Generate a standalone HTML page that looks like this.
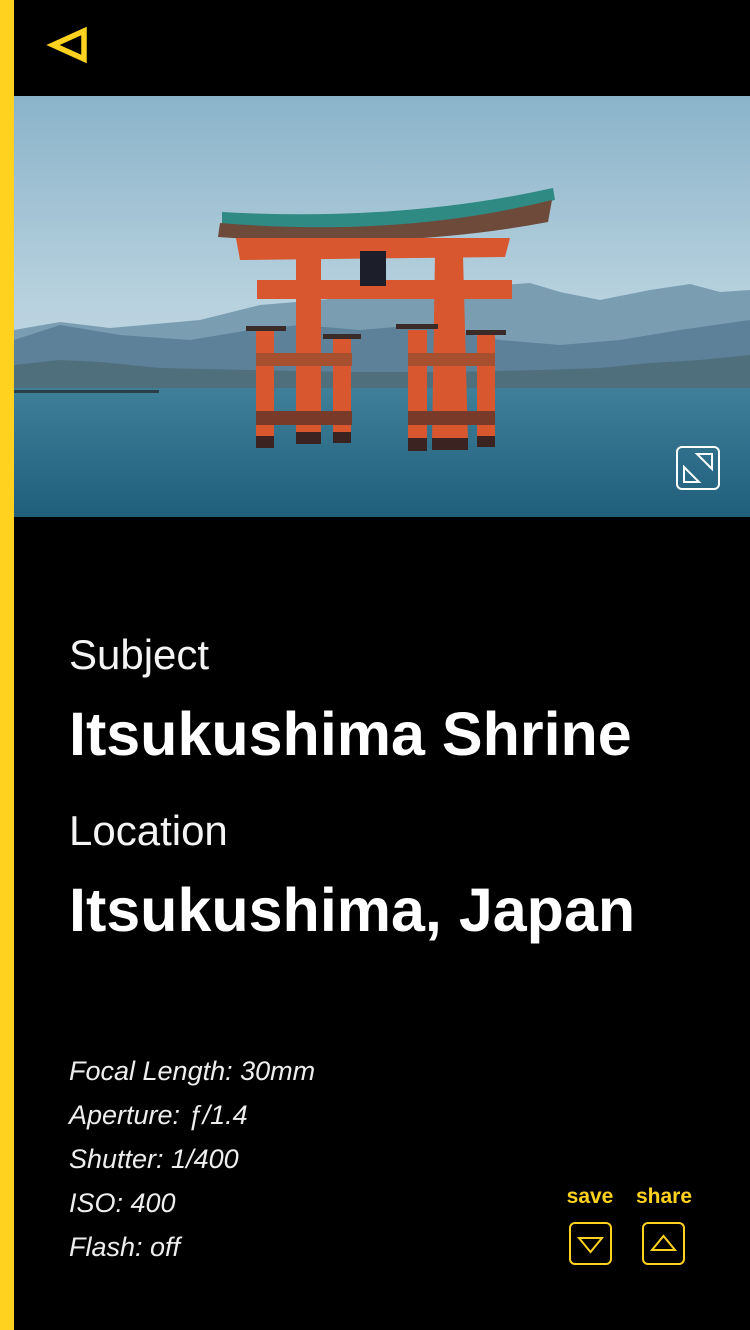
<!DOCTYPE html>
<html><head><meta charset="utf-8"><style>
html,body{margin:0;padding:0;background:#000;}
body{width:750px;height:1330px;position:relative;overflow:hidden;font-family:"Liberation Sans",sans-serif;color:#fff;}
.bar{position:absolute;left:0;top:0;width:14px;height:1330px;background:#ffd21f;}
.t{position:absolute;left:69px;white-space:nowrap;}
.lab{font-size:42px;font-weight:normal;color:#f4f4f4;}
.big{font-size:61px;font-weight:bold;letter-spacing:0;}
.det{font-size:27px;font-style:italic;color:#eee;line-height:44px;}
.y{position:absolute;color:#ffd21f;font-weight:bold;font-size:21px;text-align:center;}
</style></head><body>
<div class="bar"></div>
<svg style="position:absolute;left:0;top:0" width="120" height="96"><polygon points="53,45 84,31 84,59" fill="none" stroke="#ffd21f" stroke-width="5.5" stroke-linejoin="miter"/></svg>
<svg style="position:absolute;left:14px;top:96px" width="736" height="421" viewBox="14 96 736 421">
<defs>
<linearGradient id="sky" x1="0" y1="0" x2="0" y2="1"><stop offset="0" stop-color="#8ab3c9"/><stop offset="0.5" stop-color="#b9d2df"/><stop offset="1" stop-color="#c9dbe3"/></linearGradient>
<linearGradient id="sea" x1="0" y1="0" x2="0" y2="1"><stop offset="0" stop-color="#3f7f98"/><stop offset="1" stop-color="#1f5f7c"/></linearGradient>
</defs>
<rect x="14" y="96" width="736" height="421" fill="url(#sky)"/>
<polygon points="14,330 60,322 110,328 200,320 260,305 320,300 420,290 500,285 530,283 560,292 600,300 650,290 690,284 720,292 750,290 750,392 14,392" fill="#7a9db2"/>
<polygon points="14,340 60,325 120,335 190,340 250,330 300,325 360,330 420,325 500,340 560,345 620,340 680,330 750,320 750,392 14,392" fill="#5d8199"/>
<polygon points="14,365 60,360 100,362 160,368 250,370 350,372 450,372 540,370 600,368 650,363 700,360 750,355 750,392 14,392" fill="#4f6f7c"/>
<rect x="14" y="388" width="736" height="129" fill="url(#sea)"/>
<rect x="14" y="390" width="145" height="3" fill="#2b3f48"/>
<g fill="#d8572f">
<path d="M222,212 Q400,222 553,188 L555,200 Q400,238 222,224Z" fill="#2e8a83"/>
<path d="M220,223 Q400,238 552,200 L548,222 Q400,250 218,237Z" fill="#6e4a3a"/>
<path d="M236,238 L510,238 L505,257 L240,260Z"/>
<rect x="257" y="280" width="255" height="19"/>
<rect x="296" y="258" width="25" height="180"/>
<path d="M435,255 L463,255 L468,442 L432,442Z"/>
<rect x="256" y="330" width="18" height="117"/>
<rect x="333" y="338" width="18" height="105"/>
<rect x="408" y="330" width="19" height="118"/>
<rect x="477" y="335" width="18" height="110"/>
<rect x="256" y="353" width="96" height="13" fill="#a7502f"/>
<rect x="408" y="353" width="87" height="13" fill="#a7502f"/>
<rect x="256" y="411" width="96" height="14" fill="#7a3a2a"/>
<rect x="408" y="411" width="87" height="14" fill="#7a3a2a"/>
</g>
<rect x="360" y="251" width="26" height="35" fill="#1c1e2a"/>
<g fill="#3a2a28"><rect x="246" y="326" width="40" height="5"/><rect x="323" y="334" width="38" height="5"/><rect x="396" y="324" width="42" height="5"/><rect x="466" y="330" width="40" height="5"/></g>
<g fill="#3a2320"><rect x="256" y="436" width="18" height="12"/><rect x="296" y="432" width="25" height="12"/><rect x="333" y="432" width="18" height="11"/><rect x="408" y="438" width="19" height="13"/><rect x="432" y="438" width="36" height="12"/><rect x="477" y="436" width="18" height="11"/></g>
<rect x="677" y="447" width="42" height="42" rx="5" fill="none" stroke="#fff" stroke-width="2"/>
<polygon points="697,454 712,454 712,469" fill="none" stroke="#fff" stroke-width="2"/>
<polygon points="684,467 684,482 699,482" fill="none" stroke="#fff" stroke-width="2"/>
</svg>
<div class="t lab" style="top:631px">Subject</div>
<div class="t big" style="top:699px">Itsukushima Shrine</div>
<div class="t lab" style="top:807px">Location</div>
<div class="t big" style="top:875px">Itsukushima, Japan</div>
<div class="t det" style="top:1049px">Focal Length: 30mm<br>Aperture: ƒ/1.4<br>Shutter: 1/400<br>ISO: 400<br>Flash: off</div>
<div class="y" style="left:555px;width:70px;top:1185px">save</div>
<div class="y" style="left:624px;width:80px;top:1185px">share</div>
<svg style="position:absolute;left:560px;top:1215px" width="140" height="60">
<rect x="10" y="8" width="41" height="41" rx="5" fill="none" stroke="#ffd21f" stroke-width="2"/>
<polygon points="19,23 42,23 30.5,37" fill="none" stroke="#ffd21f" stroke-width="2"/>
<rect x="83" y="8" width="41" height="41" rx="5" fill="none" stroke="#ffd21f" stroke-width="2"/>
<polygon points="92,35 115,35 103.5,21" fill="none" stroke="#ffd21f" stroke-width="2"/>
</svg>
</body></html>
